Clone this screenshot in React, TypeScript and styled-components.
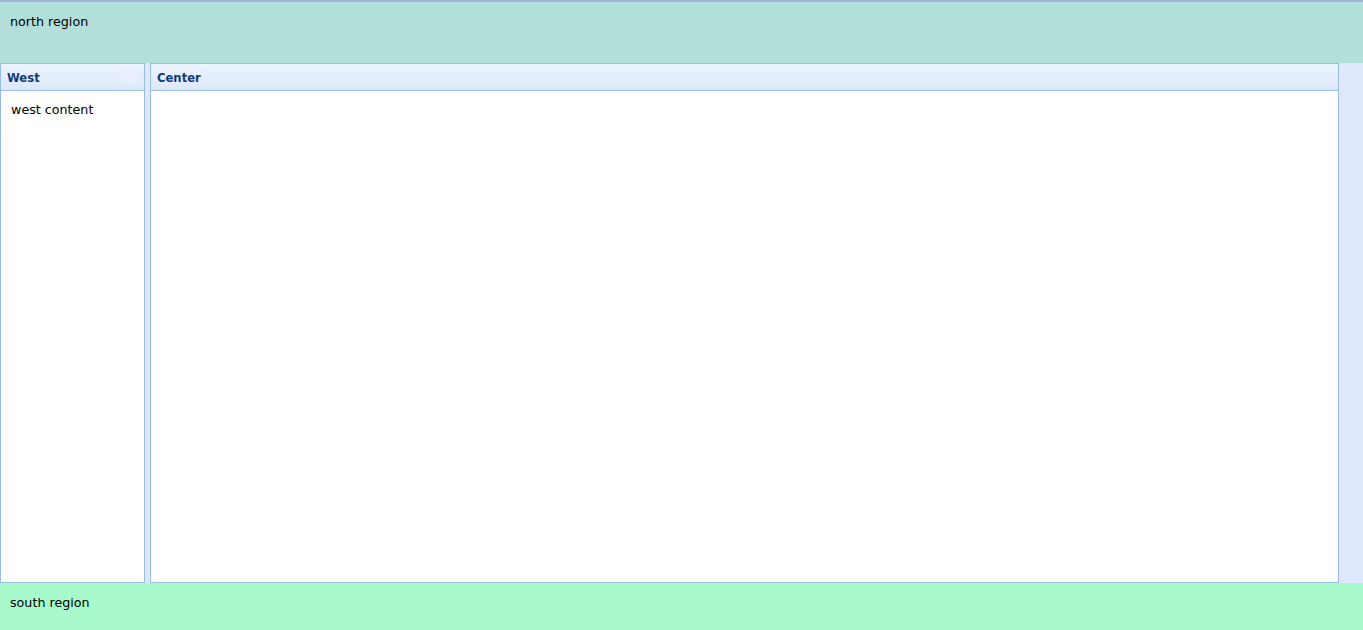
import React from 'react';
import styled, { createGlobalStyle } from 'styled-components';

const GlobalStyle = createGlobalStyle`
  html, body {
    margin: 0;
    padding: 0;
    height: 100%;
  }
  body {
    font-family: "DejaVu Sans", Verdana, sans-serif;
    color: #000;
  }
  #root {
    height: 100%;
  }
`;

const Viewport = styled.div`
  display: flex;
  flex-direction: column;
  height: 100vh;
  overflow: hidden;
`;

const Region = styled.div<{ $bg: string; $height?: number }>`
  box-sizing: border-box;
  background-color: ${(p) => p.$bg};
  ${(p) => (p.$height ? `height: ${p.$height}px; flex: none;` : 'flex: 1;')}
  padding: 7px 10px;
  font-size: 12.7px;
  line-height: 26px;
`;

const North = styled(Region)`
  border-top: 2px solid #a3b4d6;
`;

const South = styled(Region)``;

const Middle = styled.div`
  display: flex;
  height: 520px;
  flex: none;
  background-color: #dfe8f6;
`;

const Panel = styled.div<{ $width: number }>`
  box-sizing: border-box;
  width: ${(p) => p.$width}px;
  flex: none;
  display: flex;
  flex-direction: column;
  border: 1px solid #99bbe8;
  background-color: #fff;
`;

const Gap = styled.div`
  width: 5px;
  flex: none;
`;

const PanelHeader = styled.div`
  position: relative;
  box-sizing: border-box;
  height: 27px;
  flex: none;
  padding: 2px 6px 0;
  display: flex;
  align-items: center;
  border-bottom: 1px solid #99bbe8;
  background: linear-gradient(to bottom, #ebf3fe 0%, #e3edfc 60%, #dce8fb 100%);
  color: #133a78;
  font-weight: bold;
  font-size: 11.6px;
`;

const ToolSlot = styled.div`
  position: absolute;
  right: 6px;
  top: 5px;
  width: 15px;
  height: 15px;
  background-color: #e8f0fe;
`;

const PanelBody = styled.div`
  flex: 1;
  padding: 9px 10px;
  font-size: 12.7px;
  line-height: 20px;
`;

const East = styled.div`
  flex: 1;
  background-color: #dfe8fc;
`;

const App: React.FC = () => {
  return (
    <>
      <GlobalStyle />
      <Viewport>
        <North $bg="#b2dfda" $height={63}>north region</North>
        <Middle>
          <Panel $width={145}>
            <PanelHeader>
              West
              <ToolSlot />
            </PanelHeader>
            <PanelBody>west content</PanelBody>
          </Panel>
          <Gap />
          <Panel $width={1189}>
            <PanelHeader>Center</PanelHeader>
            <PanelBody />
          </Panel>
          <East />
        </Middle>
        <South $bg="#a8f9cc">south region</South>
      </Viewport>
    </>
  );
};

export default App;
